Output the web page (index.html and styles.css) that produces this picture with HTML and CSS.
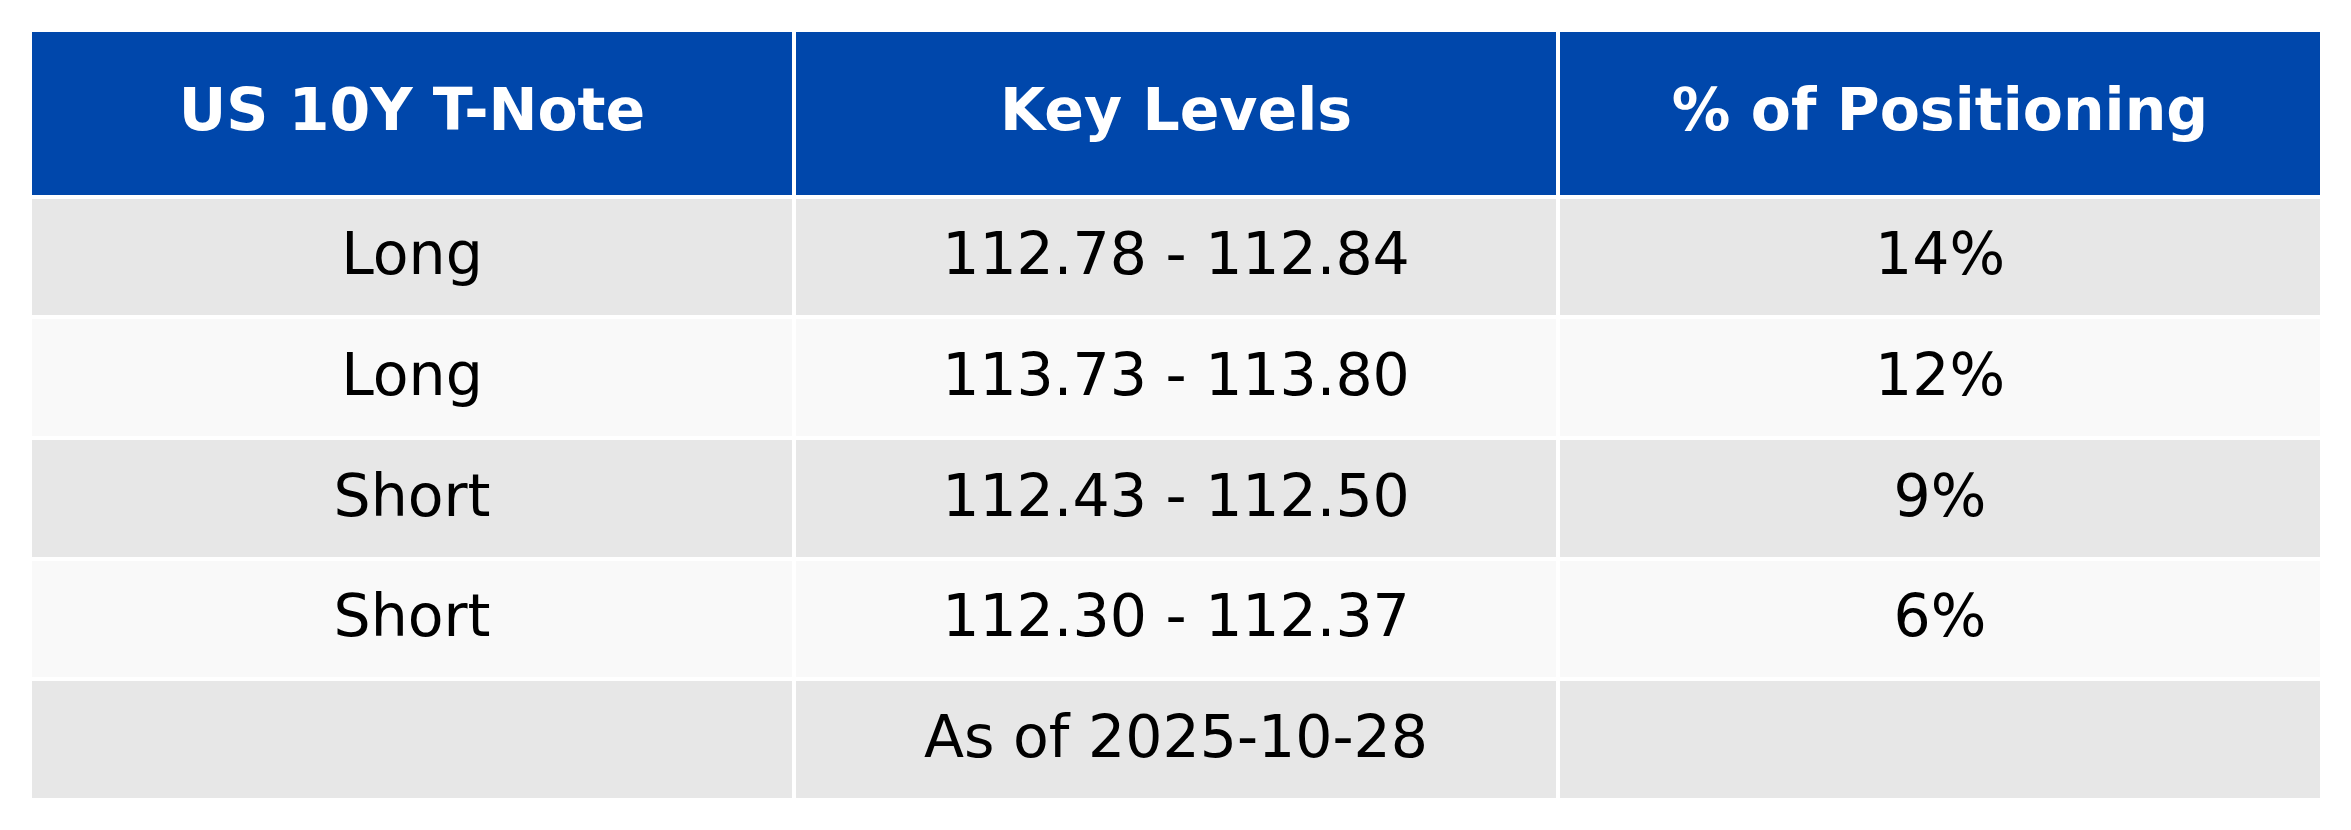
FILE: index.html
```html
<!DOCTYPE html>
<html lang="en">
<head>
<meta charset="utf-8">
<title>US 10Y T-Note Key Levels</title>
<link rel="stylesheet" href="styles.css">
</head>
<body>
<div class="levels">
  <div class="cell head">US 10Y T-Note</div>
  <div class="cell head">Key Levels</div>
  <div class="cell head">% of Positioning</div>

  <div class="cell dark">Long</div>
  <div class="cell dark">112.78 - 112.84</div>
  <div class="cell dark">14%</div>

  <div class="cell light">Long</div>
  <div class="cell light">113.73 - 113.80</div>
  <div class="cell light">12%</div>

  <div class="cell dark">Short</div>
  <div class="cell dark">112.43 - 112.50</div>
  <div class="cell dark">9%</div>

  <div class="cell light">Short</div>
  <div class="cell light">112.30 - 112.37</div>
  <div class="cell light">6%</div>

  <div class="cell dark"></div>
  <div class="cell dark">As of 2025-10-28</div>
  <div class="cell dark"></div>
</div>
</body>
</html>
```
FILE: styles.css
```css
html, body {
  margin: 0;
  padding: 0;
  background: #ffffff;
}

body {
  padding: 32px;
  font-family: "DejaVu Sans", "Liberation Sans", sans-serif;
}

.levels {
  display: grid;
  grid-template-columns: repeat(3, 760px);
  grid-template-rows: 163px 116px 117px 117px 116px 117px;
  gap: 4px;
  background: #ffffff;
}

.cell {
  display: flex;
  align-items: center;
  justify-content: center;
  padding-bottom: 6px;
  font-size: 58.5px;
  color: #000000;
  white-space: nowrap;
}

.head {
  background: #0047ab;
  color: #ffffff;
  font-weight: bold;
  padding-bottom: 8px;
}

.dark {
  background: #e7e7e7;
}

.light {
  background: #f9f9f9;
}
```
